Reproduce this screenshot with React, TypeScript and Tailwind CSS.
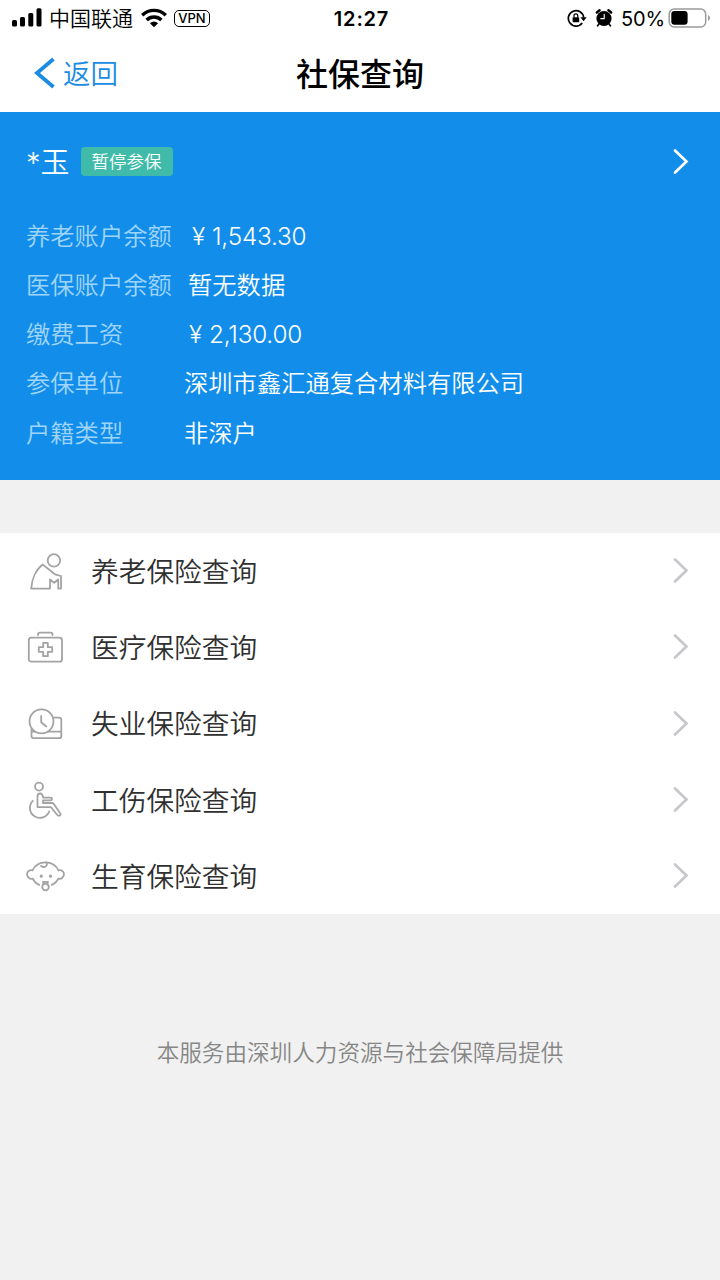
import React from "react";

interface InfoRow {
  label: string;
  value: string;
  money?: boolean;
  offset: string;
}

interface MenuItem {
  title: string;
  icon: React.ReactNode;
}

const infoRows: InfoRow[] = [
  { label: "养老账户余额", value: "1,543.30", money: true, offset: "ml-[162px]" },
  { label: "医保账户余额", value: "暂无数据", offset: "ml-[162px]" },
  { label: "缴费工资", value: "2,130.00", money: true, offset: "ml-[159px]" },
  { label: "参保单位", value: "深圳市鑫汇通复合材料有限公司", offset: "ml-[158px]" },
  { label: "户籍类型", value: "非深户", offset: "ml-[158px]" },
];

const menuItems: MenuItem[] = [
  {
    title: "养老保险查询",
    icon: (
      <>
        <circle cx="27.9" cy="9.4" r="6.2" />
        <path d="M5.2 37.6C5.8 28 10 18.5 16.8 13.6L29 23.3L35 25V37.6H32.2V28.5L28.2 31.8L24 28.5V37.6Z" />
      </>
    ),
  },
  {
    title: "医疗保险查询",
    icon: (
      <>
        <rect x="2.8" y="10.7" width="33.2" height="24" rx="2.5" />
        <path d="M12 8V7.5Q12 5.6 14 5.6H24.5Q26.5 5.6 26.5 7.5V8" />
        <path d="M17.2 15.8H21.8V20.2H26.2V24.8H21.8V29.2H17.2V24.8H12.8V20.2H17.2Z" />
      </>
    ),
  },
  {
    title: "失业保险查询",
    icon: (
      <>
        <circle cx="15.5" cy="17.3" r="12" />
        <path d="M15.2 11.8V18.3L20.3 22.5M28 13.6H33.3Q35.3 13.6 35.3 15.6V32.2Q35.3 34.2 33.3 34.2H7.5Q5.5 34.2 5.5 32.2V24.8M5.5 27.7H9M22 27.7H35.3" />
      </>
    ),
  },
  {
    title: "工伤保险查询",
    icon: (
      <>
        <circle cx="13" cy="6.6" r="4" />
        <path d="M6.8 20.8A10 10 0 1 0 23.2 31.5" />
        <path d="M11.5 27.2V16.5Q11.5 13.5 14.2 13.5Q16.3 13.5 17.3 17.7H24.5Q26 17.7 26 19Q26 20.3 24.5 20.3H17V23H26Q27.3 23 28 24.2L34.2 33.3Q35 34.8 33.7 35.5Q32.3 36.2 31.3 35L25 27.2Z" />
      </>
    ),
  },
  {
    title: "生育保险查询",
    icon: (
      <>
        <path d="M13.3 28.9Q8.5 26.8 6.8 22.7C3.5 23.5 1 20.8 1 18.3C1 15.4 3.6 13.6 6.5 14.4C9 9 14 6.3 19.5 6.3S30 9 32.5 14.4C35.4 13.6 38 15.4 38 18.3C38 20.8 35.5 23.5 32.2 22.7Q30.5 26.8 25.7 28.9" />
        <path d="M20.3 6.5C22.5 9.5 18.5 12.5 15 10" />
        <circle cx="15.3" cy="20.2" r="0.7" fill="currentColor" />
        <circle cx="24.5" cy="20.2" r="0.7" fill="currentColor" />
        <path d="M17.8 28.5L17 25.8H22L21.2 28.5" />
        <circle cx="19.5" cy="31" r="3.3" />
      </>
    ),
  },
];

const Chevron = ({ className }: { className: string }) => (
  <svg className={className} width="18" height="28" viewBox="0 0 18 28" fill="none" stroke="currentColor" strokeWidth="2.7" strokeLinecap="round">
    <path d="M3 2.5L14.5 13.5L3 24.5" />
  </svg>
);

const StatusBar = () => (
  <div className="flex h-9 justify-between pl-3 pr-[9px] text-black">
    <div className="flex flex-1 items-center">
      <svg width="31" height="20" viewBox="0 0 31 20" fill="currentColor">
        <rect x="0" y="12" width="5" height="6.5" rx="1.5" />
        <rect x="8" y="9" width="5" height="9.5" rx="1.5" />
        <rect x="16.3" y="5" width="5" height="13.5" rx="1.5" />
        <rect x="24.5" y="0.3" width="5" height="18.2" rx="1.5" />
      </svg>
      <span className="ml-[6px] pt-[2px] text-[21px] leading-9 font-[350]">中国联通</span>
      <svg className="ml-2" width="26" height="20" viewBox="0 0 26 20" fill="none" stroke="currentColor" strokeWidth="3.4">
        <path d="M1.2 7.2C8 0.8 18 0.8 24.8 7.2" />
        <path d="M5.6 12C9.8 8 16.2 8 20.4 12" />
        <path d="M13 19.2L8.900 15.2Q13 11.8 17.1 15.2Z" fill="currentColor" stroke="none" />
      </svg>
      <span className="ml-[7px] flex h-[17px] w-[36px] items-center justify-center rounded-[5px] border-[1.5px] border-black text-[13px] font-medium leading-none">VPN</span>
    </div>
    <div className="pt-px text-[20px] font-semibold leading-9 tracking-[0.8px]">12:27</div>
    <div className="flex flex-1 items-center justify-end">
      <svg width="20" height="20" viewBox="0 0 20 20" fill="none" stroke="currentColor" strokeWidth="1.7">
        <path d="M15.2 15A7.7 7.7 0 1 1 16.7 9.5" />
        <path d="M13.4 9.3H19.7L16.6 13.2Z" fill="currentColor" stroke="none" />
        <rect x="5.6" y="9.3" width="6.6" height="5" rx="0.7" fill="currentColor" stroke="none" />
        <path d="M7 9.5V7.7Q7 5.8 8.900 5.8T10.800 7.7V9.5" strokeWidth="1.2" />
      </svg>
      <svg className="ml-2" width="18" height="20" viewBox="0 0 18 20" fill="none" stroke="currentColor">
        <circle cx="9" cy="10.5" r="7.6" fill="currentColor" stroke="none" />
        <path d="M1.8 4.5L4.6 2.3M13.4 2.3L16.2 4.5" strokeWidth="2.4" strokeLinecap="round" />
        <path d="M4 16L2.6 17.8M14 16L15.4 17.8" strokeWidth="1.8" strokeLinecap="round" />
        <path d="M9.2 6V10.6H5.400" stroke="white" strokeWidth="1.1" />
      </svg>
      <span className="ml-[8px] w-[47px] pt-px text-[20px] leading-9 tracking-[-0.2px]">50%</span>
      <svg width="43" height="22" viewBox="0 0 43 22">
        <rect x="1.2" y="2" width="36.5" height="18" rx="5" fill="none" stroke="#9a9a9a" strokeWidth="1.5" />
        <rect x="3.3" y="4" width="16.3" height="13.8" rx="3.2" fill="black" />
        <path d="M40 8V14Q42 13 42 11T40 8Z" fill="#9a9a9a" />
      </svg>
    </div>
  </div>
);

const App: React.FC = () => {
  return (
    <div className="flex h-[1280px] w-[720px] flex-col overflow-hidden bg-[#f1f1f1] font-['Inter','Noto_Sans_CJK_SC',sans-serif]">
      <header className="h-28 bg-white">
        <StatusBar />
        <div className="flex h-[74px] items-center px-[34px]">
          <div className="flex flex-1 items-center text-[#1b8be4]">
            <svg width="22" height="32" viewBox="0 0 22 32" fill="none" stroke="currentColor" strokeWidth="3.8">
              <path d="M19.5 2L3 16L19.5 30" />
            </svg>
            <span className="ml-[7px] pt-[3px] text-[27.5px] leading-none font-[350]">返回</span>
          </div>
          <h1 className="pt-[3px] text-[32px] font-medium leading-none text-black">社保查询</h1>
          <div className="flex-1" />
        </div>
      </header>

      {/* Account card */}
      <section className="h-[368px] bg-[#128eea] pl-[26px] pr-[30px] text-white">
        <div className="flex h-[99px] items-center">
          <span className="pt-px text-[29px] leading-none font-[350]">*玉</span>
          <span className="ml-[11px] flex h-[29px] w-[92px] items-center justify-center rounded-[4px] bg-[#40bba9] text-[17.5px] leading-none font-[350]">暂停参保</span>
          <Chevron className="ml-auto" />
        </div>
        {infoRows.map((row) => (
          <div key={row.label} className="flex h-[49.3px] items-center text-[24.3px] leading-none font-[350]">
            <span className="-mr-[158px] w-[158px] whitespace-nowrap text-[#a0d5fa]">{row.label}</span>
            <span className={`${row.offset} flex items-center whitespace-nowrap`}>
              {row.money ? (
                <>
                  <span className="w-[24px] pl-1">¥</span>
                  <span className="tracking-[-0.2px]">{row.value}</span>
                </>
              ) : (
                row.value
              )}
            </span>
          </div>
        ))}
      </section>

      {/* Insurance list */}
      <section className="mt-[53px] bg-white pl-[26px] pr-[30px]">
        {menuItems.map((item) => (
          <div key={item.title} className="flex h-[76.3px] items-center">
            <svg width="40" height="40" viewBox="0 0 40 40" fill="none" stroke="currentColor" strokeWidth="1.8" strokeLinejoin="round" strokeLinecap="round" className="text-[#a3a3a3]">
              {item.icon}
            </svg>
            <span className="ml-[25px] pt-[3px] text-[27.7px] leading-none font-[350] text-[#303030]">{item.title}</span>
            <Chevron className="ml-auto text-[#c7c7cc]" />
          </div>
        ))}
      </section>

      <footer className="mt-[122px] text-center text-[22.6px] leading-[34px] font-[350] text-[#868686]">
        本服务由深圳人力资源与社会保障局提供
      </footer>
    </div>
  );
};

export default App;
